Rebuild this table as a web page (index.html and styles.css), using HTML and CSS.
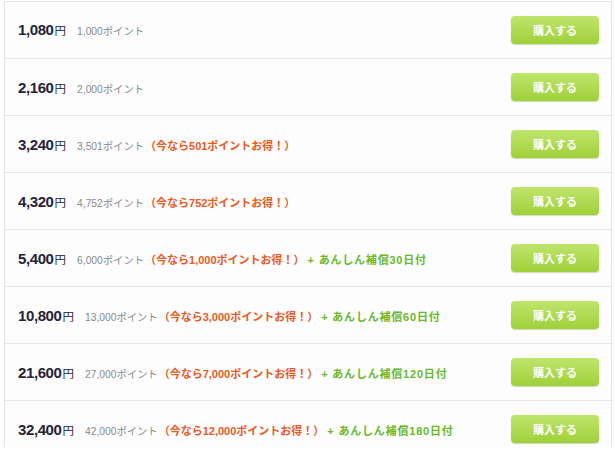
FILE: index.html
```html
<!DOCTYPE html>
<html lang="ja">
<head>
<meta charset="utf-8">
<link rel="stylesheet" href="styles.css">
</head>
<body>
<div class="list">
  <div class="row">
    <div class="info"><span class="price">1,080<small>円</small></span><span class="pts">1,000ポイント</span></div>
    <button class="buy">購入する</button>
  </div>
  <div class="row">
    <div class="info"><span class="price">2,160<small>円</small></span><span class="pts">2,000ポイント</span></div>
    <button class="buy">購入する</button>
  </div>
  <div class="row">
    <div class="info"><span class="price">3,240<small>円</small></span><span class="pts">3,501ポイント</span><span class="bonus">（今なら501ポイントお得！）</span></div>
    <button class="buy">購入する</button>
  </div>
  <div class="row">
    <div class="info"><span class="price">4,320<small>円</small></span><span class="pts">4,752ポイント</span><span class="bonus">（今なら752ポイントお得！）</span></div>
    <button class="buy">購入する</button>
  </div>
  <div class="row">
    <div class="info"><span class="price">5,400<small>円</small></span><span class="pts">6,000ポイント</span><span class="bonus">（今なら1,000ポイントお得！）</span><span class="safe">+ あんしん補償30日付</span></div>
    <button class="buy">購入する</button>
  </div>
  <div class="row">
    <div class="info"><span class="price">10,800<small>円</small></span><span class="pts">13,000ポイント</span><span class="bonus">（今なら3,000ポイントお得！）</span><span class="safe">+ あんしん補償60日付</span></div>
    <button class="buy">購入する</button>
  </div>
  <div class="row">
    <div class="info"><span class="price">21,600<small>円</small></span><span class="pts">27,000ポイント</span><span class="bonus">（今なら7,000ポイントお得！）</span><span class="safe">+ あんしん補償120日付</span></div>
    <button class="buy">購入する</button>
  </div>
  <div class="row">
    <div class="info"><span class="price">32,400<small>円</small></span><span class="pts">42,000ポイント</span><span class="bonus">（今なら12,000ポイントお得！）</span><span class="safe">+ あんしん補償180日付</span></div>
    <button class="buy">購入する</button>
  </div>
</div>
</body>
</html>
```

FILE: styles.css
```css
html, body {
  margin: 0;
  padding: 0;
  background: #ffffff;
}
body {
  padding: 1px 3px 0 4px;
  font-family: "Liberation Sans", "Noto Sans CJK JP", sans-serif;
}
.list {
  border: 1px solid #e3e8eb;
  border-bottom: none;
  height: 445px;
  overflow: hidden;
  background: #fdfdfd;
}
.row {
  height: 55px;
  border-bottom: 1px solid #e3e8eb;
  display: flex;
  align-items: center;
  justify-content: space-between;
  padding: 0 12px 1px 13px;
}
.row + .row {
  height: 56px;
  padding-bottom: 0;
}
.info {
  display: flex;
  align-items: baseline;
  white-space: nowrap;
}
.price {
  font-size: 15px;
  font-weight: bold;
  color: #24233a;
  letter-spacing: -0.4px;
  margin-right: 11px;
}
.price small {
  font-size: 11.5px;
  font-weight: normal;
  margin-left: 1px;
  letter-spacing: 0;
}
.pts {
  font-size: 10.3px;
  color: #8a8a8a;
}
.bonus {
  font-size: 11px;
  color: #e85a1e;
  font-weight: bold;
  margin-left: 1px;
}
.safe {
  font-size: 11px;
  color: #68b82a;
  font-weight: bold;
  margin-left: 3px;
  letter-spacing: 0.8px;
}
.buy {
  width: 88px;
  height: 28px;
  border: none;
  border-radius: 4px;
  background: linear-gradient(#bfe56c, #9fd03a);
  box-shadow: 0 1px 1px rgba(120, 160, 60, 0.35);
  color: #ffffff;
  font-family: "Noto Sans CJK JP", sans-serif;
  font-weight: bold;
  font-size: 11px;
  padding: 0;
  cursor: pointer;
}
```
